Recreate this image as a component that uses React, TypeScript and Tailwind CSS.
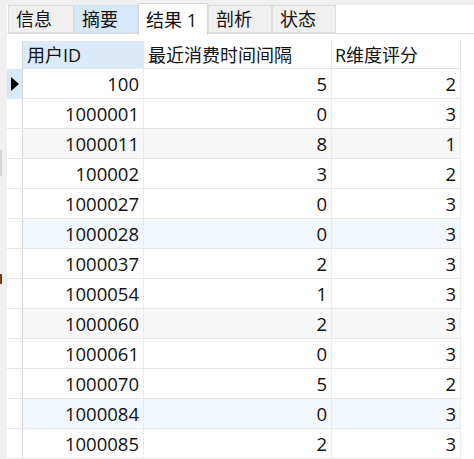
import React from 'react';

type Row = { id: string; gap: number; score: number; bg: 'white' | 'gray' | 'blue' };

const rows: Row[] = [
  { id: '100', gap: 5, score: 2, bg: 'white' },
  { id: '1000001', gap: 0, score: 3, bg: 'white' },
  { id: '1000011', gap: 8, score: 1, bg: 'gray' },
  { id: '100002', gap: 3, score: 2, bg: 'white' },
  { id: '1000027', gap: 0, score: 3, bg: 'white' },
  { id: '1000028', gap: 0, score: 3, bg: 'blue' },
  { id: '1000037', gap: 2, score: 3, bg: 'white' },
  { id: '1000054', gap: 1, score: 3, bg: 'white' },
  { id: '1000060', gap: 2, score: 3, bg: 'gray' },
  { id: '1000061', gap: 0, score: 3, bg: 'white' },
  { id: '1000070', gap: 5, score: 2, bg: 'white' },
  { id: '1000084', gap: 0, score: 3, bg: 'blue' },
  { id: '1000085', gap: 2, score: 3, bg: 'white' },
];

const tabs = [
  { label: '信息', w: 'w-[66px]', state: 'idle' },
  { label: '摘要', w: 'w-[64px]', state: 'hover' },
  { label: '结果 1', w: 'w-[70px]', state: 'active' },
  { label: '剖析', w: 'w-[64px]', state: 'idle' },
  { label: '状态', w: 'w-[64px]', state: 'idle' },
];

const font = { fontFamily: '"Open Sans", "Noto Sans CJK SC", sans-serif' };

export default function App() {
  return (
    <div
      className="flex h-[459px] w-[474px] overflow-hidden bg-white text-[18px] text-[#111]"
      style={font}
    >
      {/* 左侧窄条 */}
      <div className="flex w-[7px] shrink-0 flex-col bg-[#f0f0f0]">
        <div className="h-[150px]" />
        <div className="h-[26px] w-[2px] bg-[#d6d6d6]" />
        <div className="h-[98px]" />
        <div className="h-[10px] w-[2px] bg-[#7a3b10]" />
      </div>

      <div className="flex flex-1 flex-col">
        {/* 标签栏 */}
        <div className="h-[5px] bg-[#f0f0f0]" />
        <div className="flex h-[29px] border-b border-[#dcdcdc] pl-[1px]">
          {tabs.map((t) => (
            <div
              key={t.label}
              className={`${t.w} flex items-center px-[7px] pt-[1px] leading-none ${
                t.state === 'active'
                  ? '-mt-[2px] h-[32px] border border-b-0 border-[#d6d6d6] bg-white'
                  : t.state === 'hover'
                  ? 'border border-[#cfdff0] bg-[#d9e8f8]'
                  : 'border border-[#dadada] bg-[#f0f0f0]'
              }`}
            >
              {t.label}
            </div>
          ))}
        </div>
        <div className="h-[8px]" />

        {/* 结果表格 */}
        <div className="w-[454px]">
          <div className="flex h-[28px] leading-none">
            <div className="w-[16px] border-r border-[#d6d6d6]" />
            <div className="flex w-[121px] items-center border-r border-b border-[#e6e6e6] bg-[#dbe9f8] pl-[4px]">
              用户ID
            </div>
            <div className="flex w-[188px] items-center border-r border-b border-[#e6e6e6] pl-[4px]">
              最近消费时间间隔
            </div>
            <div className="flex w-[129px] items-center border-r border-b border-[#e0e0e0] pl-[3px]">
              R维度评分
            </div>
          </div>

          {rows.map((r, i) => (
            <div
              key={r.id}
              className={`flex h-[30px] border-b border-[#e6e6e6] text-[18.5px] leading-none ${
                r.bg === 'gray' ? 'bg-[#f7f7f7]' : r.bg === 'blue' ? 'bg-[#f2f8fd]' : 'bg-white'
              }`}
            >
              <div
                className={`flex w-[16px] items-center justify-center border-r border-[#d6d6d6] ${
                  i === 0 ? 'bg-[#d9e8f7]' : 'bg-white'
                }`}
              >
                {i === 0 && (
                  <svg width="10" height="14" viewBox="0 0 10 14">
                    <path d="M1 0 L9 7 L1 14 Z" fill="#000" />
                  </svg>
                )}
              </div>
              <div className="flex w-[121px] items-center justify-end border-r border-[#ececec] pt-[2px] pr-[4px]">
                {r.id}
              </div>
              <div className="flex w-[188px] items-center justify-end border-r border-[#ececec] pt-[2px] pr-[4px]">
                {r.gap}
              </div>
              <div className="flex w-[129px] items-center justify-end border-r border-[#ececec] pt-[2px] pr-[4px]">
                {r.score}
              </div>
            </div>
          ))}
        </div>
      </div>
    </div>
  );
}
